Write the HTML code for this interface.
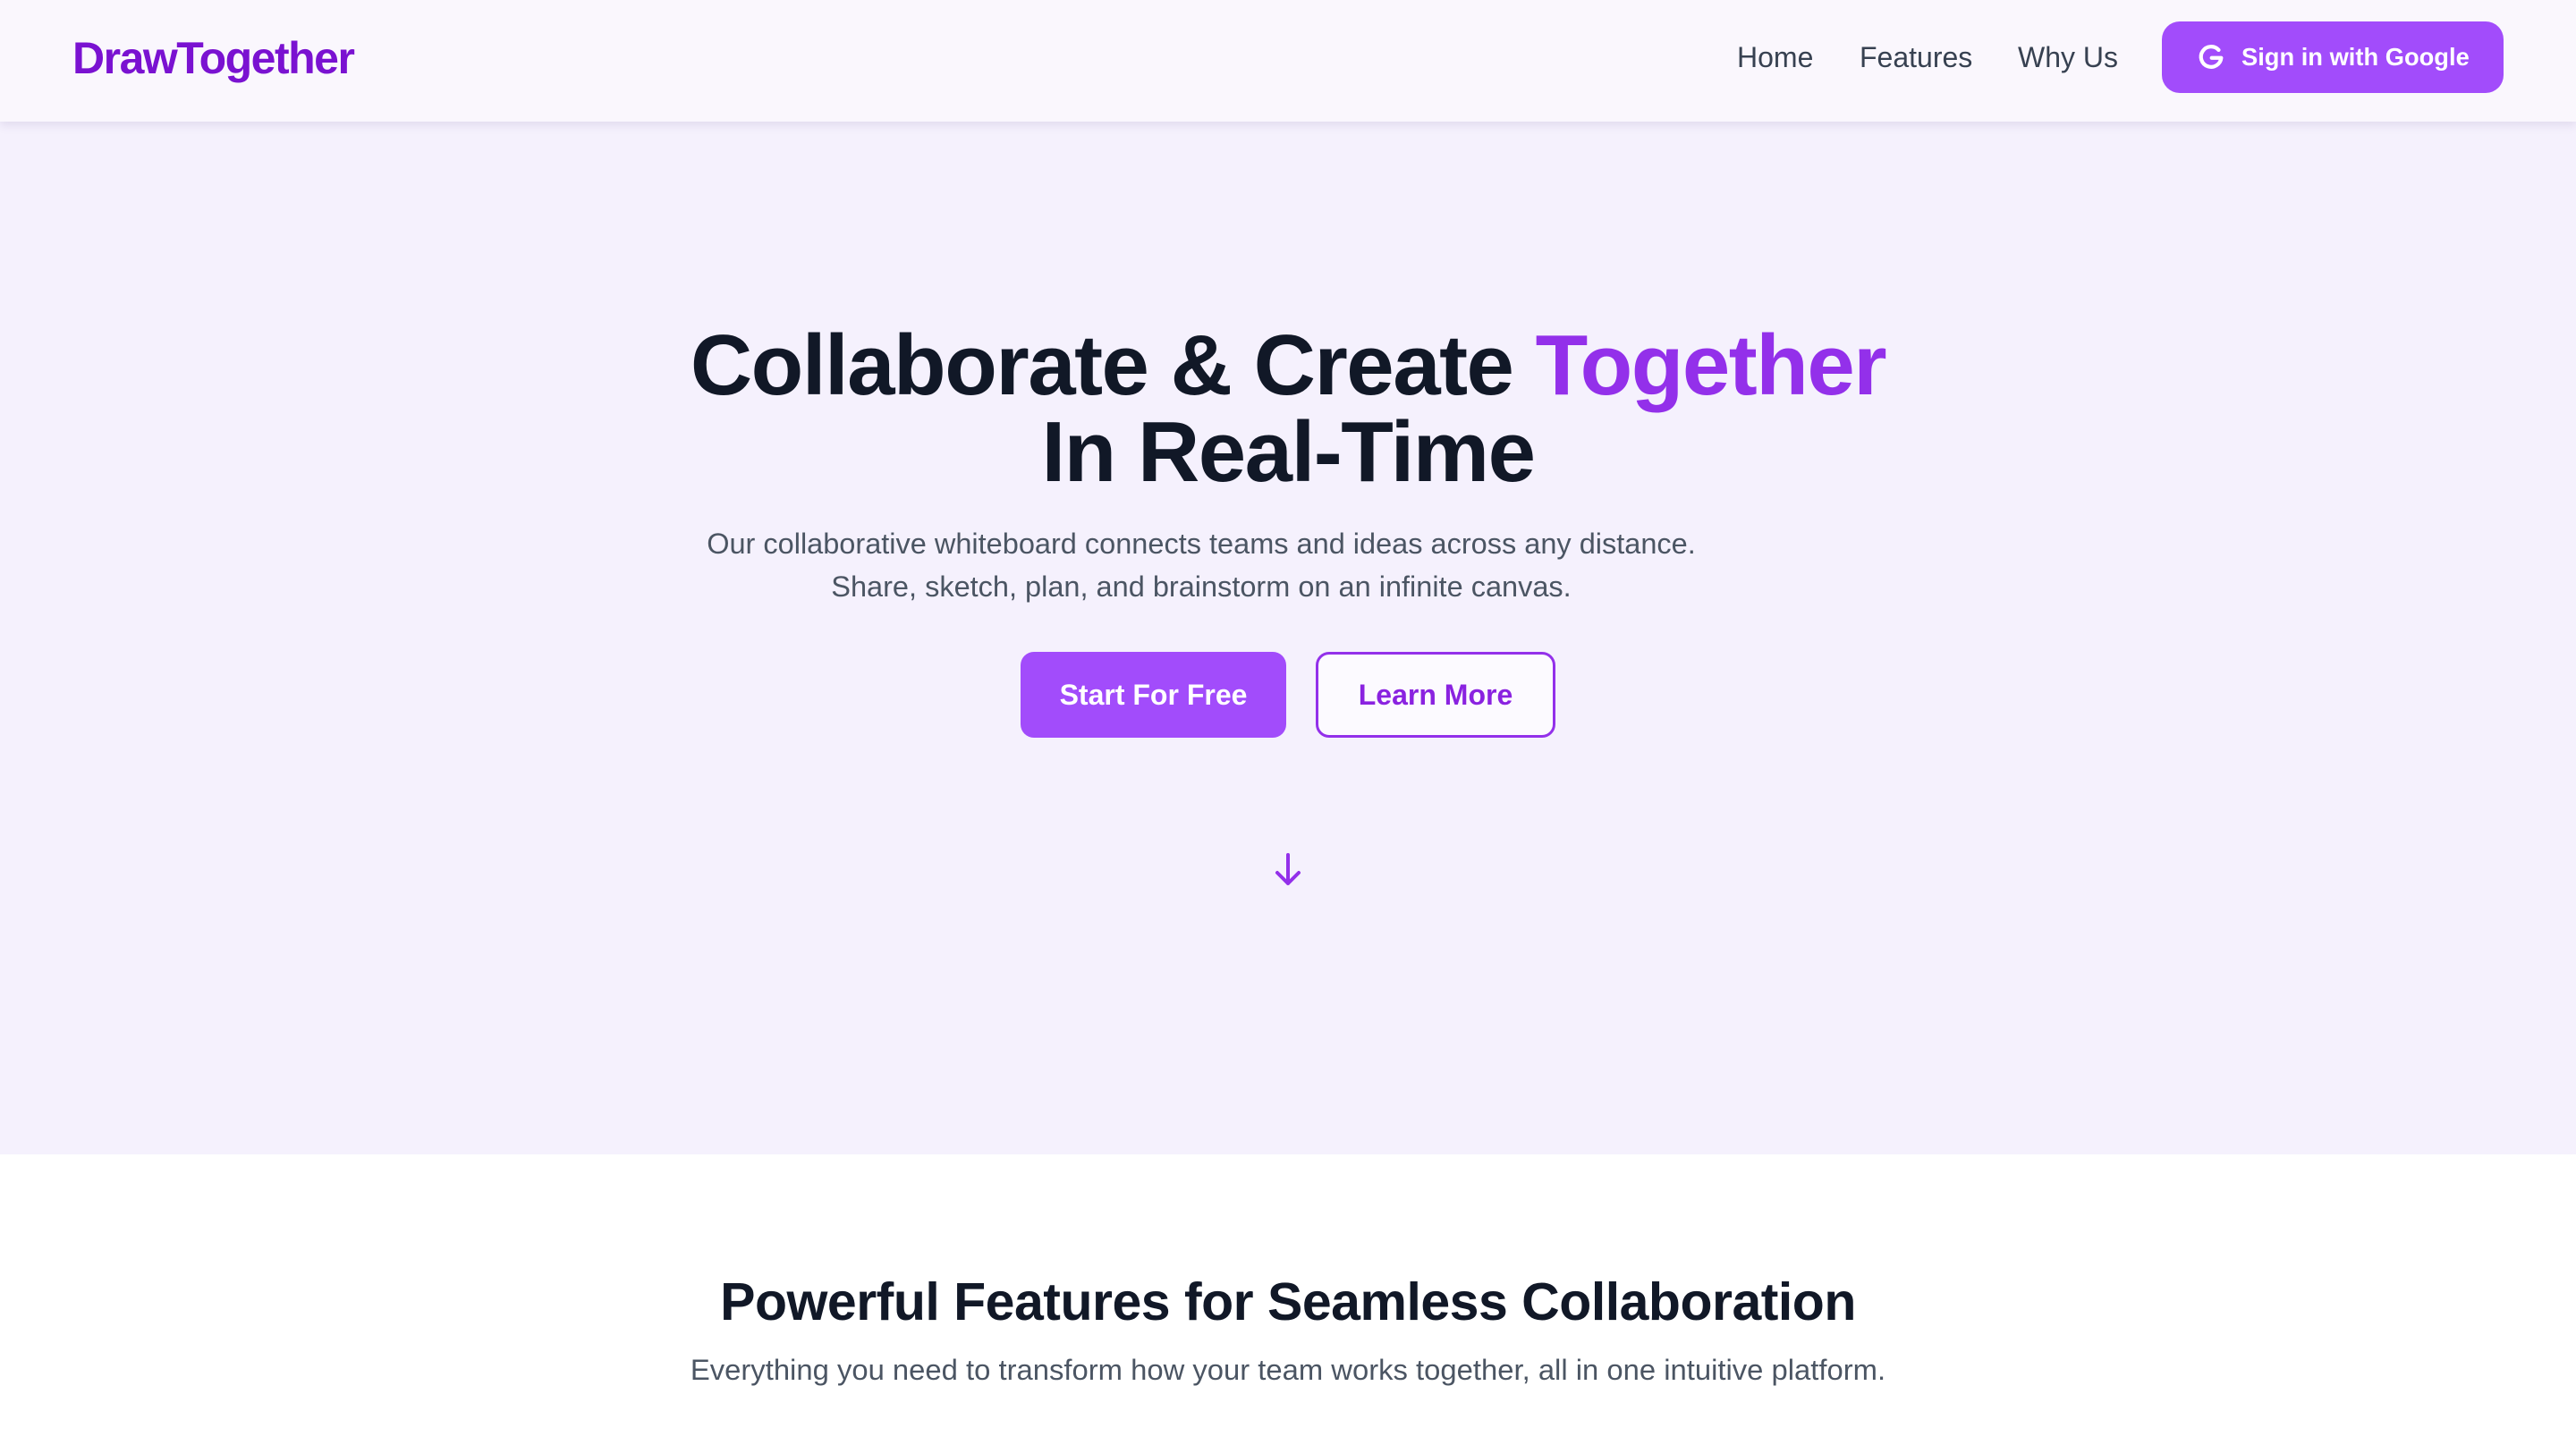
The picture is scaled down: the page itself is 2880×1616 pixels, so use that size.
<!DOCTYPE html>
<html><head><meta charset="utf-8"><style>
*{margin:0;padding:0;box-sizing:border-box}
body{width:2880px;height:1616px;overflow:hidden;font-family:"Liberation Sans",sans-serif;background:#fff}
.hdr{position:absolute;left:0;top:0;width:2880px;height:136px;background:#faf7fd;box-shadow:0 4px 10px rgba(80,60,120,.12);z-index:2}
.logo{position:absolute;left:81px;top:36px;font-size:50px;font-weight:bold;color:#7a12d1;letter-spacing:-1.5px}
.nav{position:absolute;top:46px;font-size:32px;color:#374151}
.gbtn{position:absolute;left:2417px;top:24px;width:382px;height:80px;background:#a24cfb;border-radius:20px}
.gbtn span{position:absolute;left:89px;top:24px;font-size:27.3px;font-weight:bold;color:#fff}
.hero{position:absolute;left:0;top:136px;width:2880px;height:1155px;background:#f5f1fd}
h1{position:absolute;left:0;width:2880px;top:360px;text-align:center;font-size:96px;line-height:97px;color:#111827;letter-spacing:-1.5px}
h1 em{font-style:normal;color:#9330ea}
.p{position:absolute;left:-97px;width:2880px;top:584px;text-align:center;font-size:32.5px;line-height:48px;color:#4b5563}
.b1{position:absolute;left:1141px;top:729px;width:297px;height:96px;background:#a24cfb;border-radius:15px;color:#fff;font-size:32px;font-weight:bold;text-align:center;line-height:96px}
.b2{position:absolute;left:1471px;top:729px;width:268px;height:96px;border:3px solid #9330ea;border-radius:15px;color:#8a22e0;font-size:32px;font-weight:bold;text-align:center;line-height:90px;background:#fcfaff}
h2{position:absolute;left:0;width:2880px;top:1422px;text-align:center;font-size:59px;color:#111827;letter-spacing:-0.5px}
.sub{position:absolute;left:0;width:2880px;top:1513px;text-align:center;font-size:32.8px;color:#4b5563}
</style></head><body>
<div class="hdr">
<div class="logo">DrawTogether</div>
<div class="nav" style="left:1942px">Home</div>
<div class="nav" style="left:2079px">Features</div>
<div class="nav" style="left:2256px">Why Us</div>
<div class="gbtn"><svg style="position:absolute;left:38px;top:22px" width="34" height="36" viewBox="0 0 24 24"><path d="M18 6.3A8 8 0 1 0 20 12.5H12.5" fill="none" stroke="#fff" stroke-width="3" stroke-linecap="round" stroke-linejoin="round"/></svg><span>Sign in with Google</span></div>
</div>
<div class="hero"></div>
<h1>Collaborate &amp; Create <em>Together</em><br>In Real-Time</h1>
<div class="p">Our collaborative whiteboard connects teams and ideas across any distance.<br>Share, sketch, plan, and brainstorm on an infinite canvas.</div>
<div class="b1">Start For Free</div>
<div class="b2">Learn More</div>
<svg style="position:absolute;left:1420px;top:952px" width="40" height="42" viewBox="0 0 40 42"><path d="M20 4v32M8 24l12 12 12-12" fill="none" stroke="#9330ea" stroke-width="4" stroke-linecap="round" stroke-linejoin="round"/></svg>
<h2>Powerful Features for Seamless Collaboration</h2>
<div class="sub">Everything you need to transform how your team works together, all in one intuitive platform.</div>
</body></html>
